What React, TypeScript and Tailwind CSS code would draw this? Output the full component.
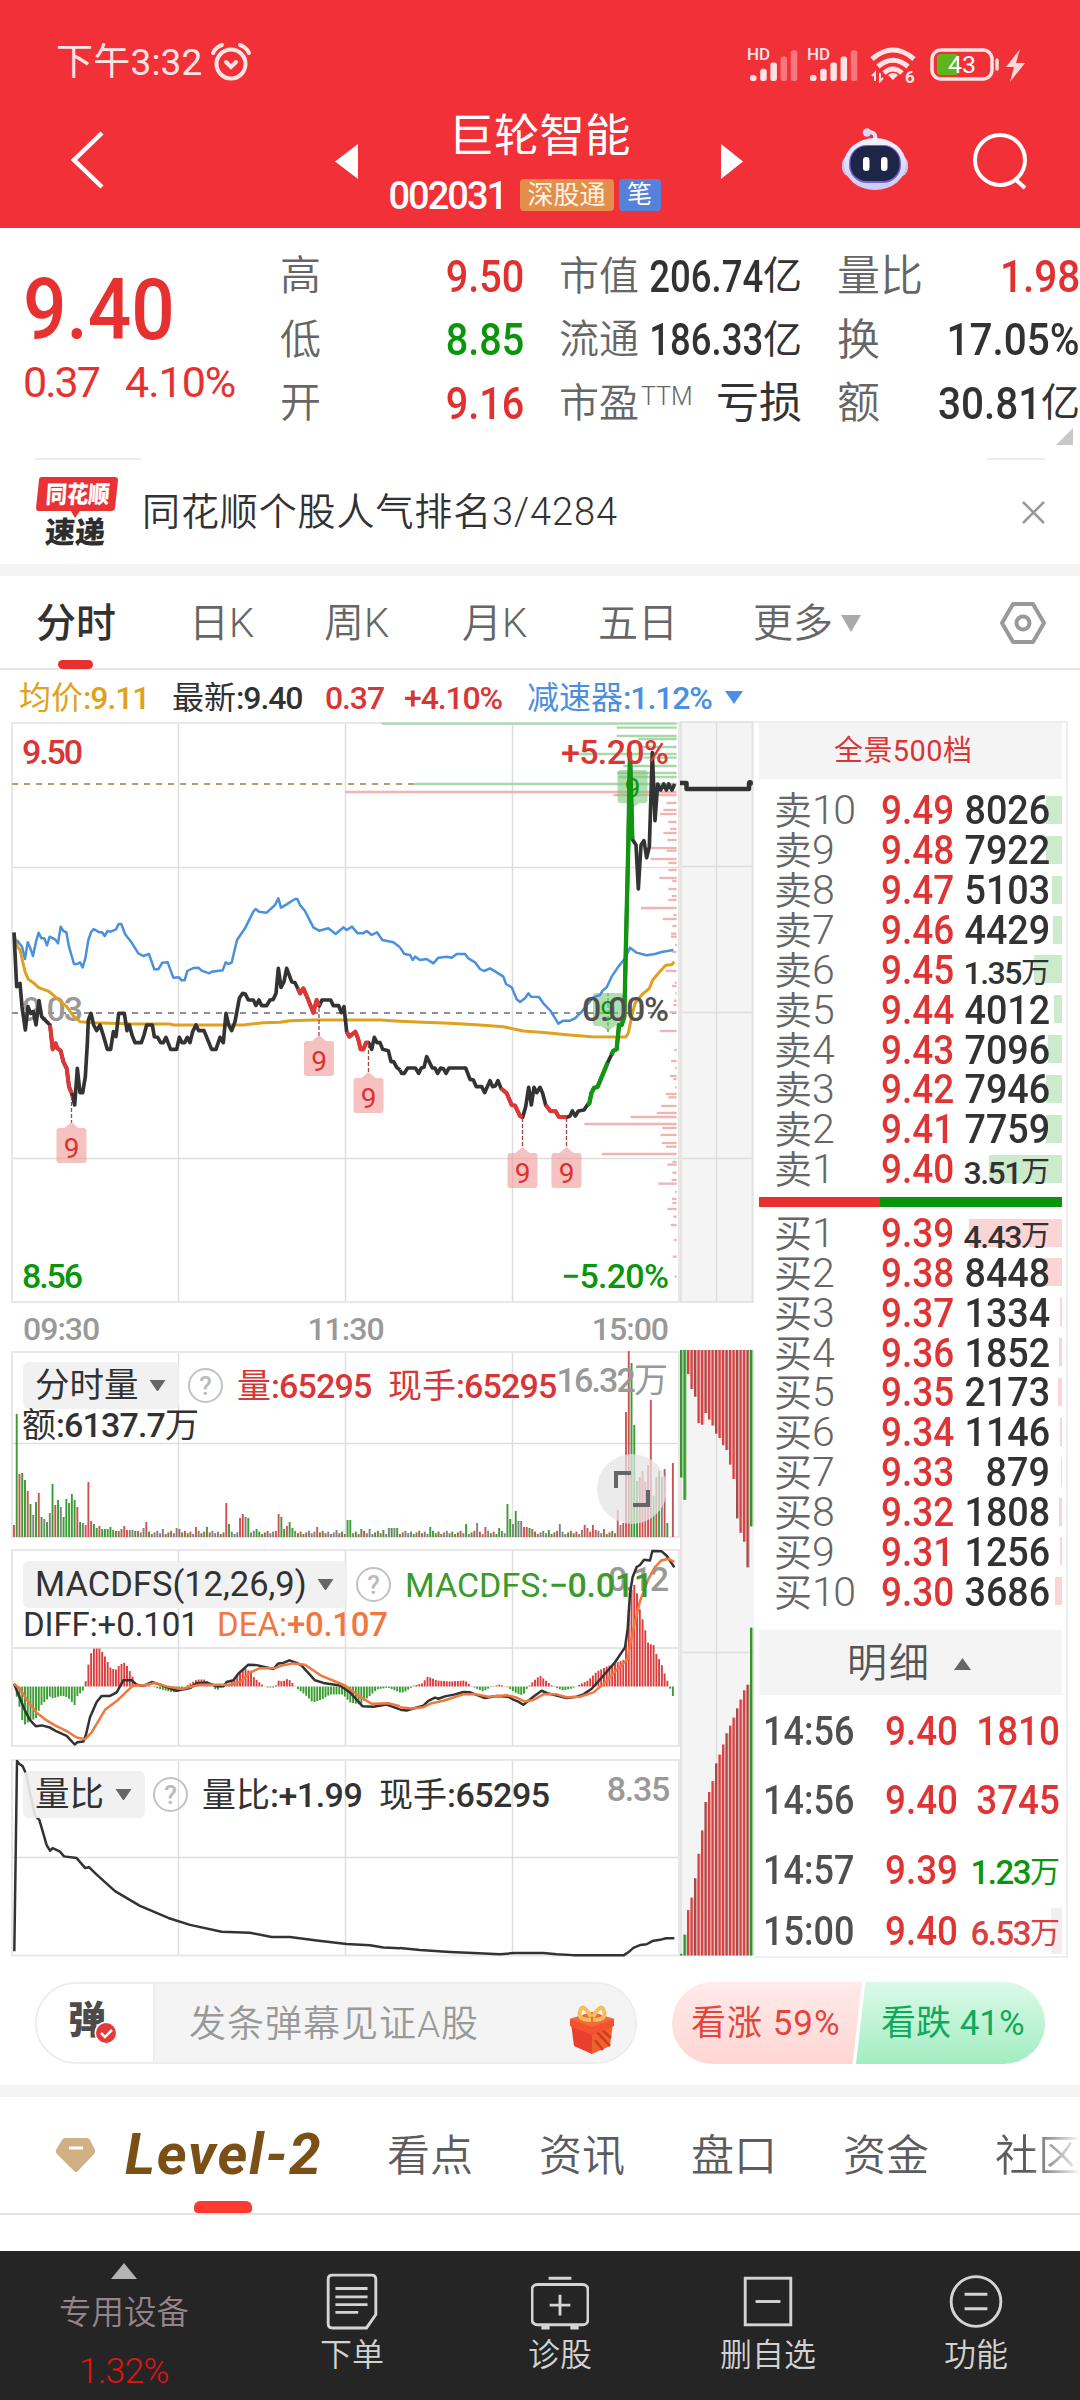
import React from "react";

type Tone = "r" | "g" | "k";

const LATIN = "font-['Roboto','Noto_Sans_CJK_SC',sans-serif]";

/* Numbers are set medium and tight, Han characters lighter. */
function Mixed({ text, className = "", tracking = "tracking-[-0.035em]", han = "font-normal tracking-normal" }: { text: string; className?: string; tracking?: string; han?: string }) {
  return (
    <span className={`whitespace-nowrap ${tracking} ${className}`}>
      {text.split(/([\u4e00-\u9fff]+)/).filter(Boolean).map((part, i) =>
        /[\u4e00-\u9fff]/.test(part) ? <span key={i} className={han}>{part}</span> : part,
      )}
    </span>
  );
}

/* ---------- Header ---------- */

function Signal({ faded }: { faded: number }) {
  return (
    <svg className="overflow-visible" width="52" height="38" viewBox="0 0 52 38">
      <text x="0" y="14" fontSize="17" fontWeight="500" fill="#ffe4e4" textLength="23" fontFamily="Roboto">HD</text>
      {[0, 1, 2, 3, 4].map((i) => (
        <rect key={i} x={3 + i * 10.2} y={29 - i * 6.2} width="6.5" height={6 + i * 6.2} rx="2.5" fill="#ffe4e4" opacity={i > 4 - faded ? 0.4 : 1} />
      ))}
    </svg>
  );
}

function StatusBar() {
  return (
    <div className="flex h-[102px] items-end justify-between pb-[18px] pl-[56px] pr-[54px] text-[#ffe4e4]">
      <div className="flex items-center gap-[7px]">
        <span className="pt-[2px] text-[37px] leading-[42px] tracking-[0.200px]">下午3:32</span>
        <svg width="42" height="40" viewBox="0 0 42 40" fill="none" stroke="#ffe4e4" strokeWidth="4" strokeLinecap="round">
          <circle cx="21" cy="22" r="14.5" />
          <path d="M3 11Q6 5 12 3M39 11Q36 5 30 3M16 20l5 5 5-5" />
        </svg>
      </div>
      <div className="flex items-center">
        <Signal faded={2} />
        <div className="w-[8px]" />
        <Signal faded={1} />
        <svg className="ml-[10px] overflow-visible" width="50" height="38" viewBox="0 0 50 38" fill="none" stroke="#ffe4e4" strokeWidth="5">
          <path d="M3 13Q24-5 45 13M9 20.500Q24 8 39 20.500M15 27Q24 19 33 27" />
          <path d="M24 34l-5-5q5-4 10 0z" fill="#ffe4e4" stroke="none" />
          <path d="M6 35v-8l-3 3M11 27v8l3-3" strokeWidth="2" />
          <text x="36" y="37" fontSize="17" fontWeight="700" fill="#ffe4e4" stroke="none" fontFamily="Roboto">6</text>
        </svg>
        <svg className="ml-[9px]" width="98" height="36" viewBox="0 0 98 36">
          <rect x="9" y="7" width="22" height="21" rx="4" fill="#5fb61c" />
          <rect x="4" y="3" width="60" height="29" rx="9" fill="none" stroke="#ffe4e4" strokeWidth="3.500" />
          <path d="M69 13v9" stroke="#ffe4e4" strokeWidth="3.500" strokeLinecap="round" />
          <text x="20" y="26" fontSize="24" fill="#fff" textLength="28" lengthAdjust="spacingAndGlyphs" fontFamily="Roboto">43</text>
          <path d="M92 2L78 20h8l-4 15 15-19h-9z" fill="#ffd6d6" />
        </svg>
      </div>
    </div>
  );
}

function Robot() {
  return (
    <svg width="68" height="64" viewBox="0 0 68 64">
      <defs>
        <linearGradient id="head" x1="0" y1="0" x2="0" y2="1">
          <stop offset="0" stopColor="#f6f3ff" />
          <stop offset="1" stopColor="#c9ccf5" />
        </linearGradient>
      </defs>
      <path d="M34 12Q36 4 27 4" stroke="#e5dff8" strokeWidth="4" fill="none" />
      <circle cx="26" cy="4.500" r="4.200" fill="#ddd6f6" />
      <rect x="1" y="27" width="66" height="22" rx="9" fill="#c6c3ee" />
      <ellipse cx="34" cy="36" rx="31" ry="26" fill="url(#head)" />
      <rect x="8" y="17" width="52" height="38" rx="18" fill="#7360d8" />
      <rect x="9.500" y="18" width="49" height="35" rx="16" fill="#1d2647" />
      <rect x="22" y="29" width="6.500" height="14" rx="3.200" fill="#fff" />
      <rect x="40" y="29" width="6.500" height="14" rx="3.200" fill="#fff" />
    </svg>
  );
}

function Header() {
  return (
    <header className="h-[228px] bg-[#f13038] text-white">
      <StatusBar />
      <div className="flex h-[126px]">
        <svg className="ml-[66px] mt-[27px]" width="44" height="64" viewBox="0 0 44 64" fill="none" stroke="#fff" strokeWidth="4.500">
          <path d="M36 4L8 31l28 27" />
        </svg>
        <svg className="ml-[225px] mt-[42px]" width="23" height="35" viewBox="0 0 23 35"><path d="M0 17.500L23 0v35z" fill="#fff" /></svg>
        <div className="flex w-[363px] flex-col items-center">
          <div className="mt-[11px] text-[45.500px] leading-[48px]">巨轮智能</div>
          <div className="mr-[30px] mt-[18px] flex h-[32px] items-center">
            <span className="w-[131px] pt-[2px] text-[38px] font-medium leading-none tracking-[-2px]">002031</span>
            <span className="flex h-[32px] w-[94px] items-center justify-center rounded-[4px] bg-[#e48e4b] text-[26px] text-[#fff3e6]">深股通</span>
            <span className="ml-[5px] flex h-[32px] w-[42px] items-center justify-center rounded-[4px] bg-[#5482da] text-[25px]">笔</span>
          </div>
        </div>
        <svg className="mt-[42px]" width="22" height="35" viewBox="0 0 22 35"><path d="M22 17.500L0 0v35z" fill="#fff" /></svg>
        <div className="ml-[98px] mt-[26px]"><Robot /></div>
        <svg className="ml-[63px] mt-[29px]" width="60" height="62" viewBox="0 0 60 62" fill="none" stroke="#fff" strokeWidth="4">
          <circle cx="28" cy="29" r="25" />
          <path d="M43 48l10 9" />
        </svg>
      </div>
    </header>
  );
}

/* ---------- Quote ---------- */

const quoteRows = [
  ["高", "9.50", "text-[#e03030]", "市值", "206.74亿", "量比", "1.98", "text-[#e03030]"],
  ["低", "8.85", "text-[#0a960a]", "流通", "186.33亿", "换", "17.05%", "text-[#323232]"],
  ["开", "9.16", "text-[#e03030]", "市盈", "亏损", "额", "30.81亿", "text-[#323232]"],
];

/* A figure narrowed toward its right edge, followed by an optional Han unit. */
function Figure({ text, className, narrow = "scale-x-[0.9]" }: { text: string; className: string; narrow?: string }) {
  const digits = text.replace(/[\u4e00-\u9fff]+/, "");
  const unit = text.replace(/[^\u4e00-\u9fff]+/, "");
  return (
    <span className={`flex items-center justify-end whitespace-nowrap ${className}`}>
      {digits && <span className={`origin-right ${narrow}`}>{digits}</span>}
      {unit && <span className={digits ? "text-[39px] font-normal" : "text-[43px] font-normal"}>{unit}</span>}
    </span>
  );
}

function Quote() {
  return (
    <section className="relative flex h-[230px] overflow-hidden">
      <div className="w-[280px] pl-[23px] text-[#e73131]">
        <div className="mt-[40px] w-fit origin-left scale-x-[0.9] text-[85px] font-medium leading-[84px]">9.40</div>
        <div className="mt-[7px] flex gap-[26px] text-[43px] leading-[46px]">
          <span className="w-[76px] tracking-[-2px]">0.37</span>
          <span className="tracking-[-1px]">4.10%</span>
        </div>
      </div>
      <div className="flex w-[800px] flex-col pt-[17px]">
        {quoteRows.map(([a, av, at, b, bv, c, cv, ct]) => (
          <div key={a} className="flex h-[63.500px] items-center text-[44px] font-medium leading-none text-[#323232]">
            <span className="w-[110px] text-[41px] font-[350] text-[#666]">{a}</span>
            <Figure text={av} className={`w-[134px] ${at}`} />
            <span className="ml-[35px] w-[60px] whitespace-nowrap text-[40px] font-[350] text-[#666]">
              {b}{b === "市盈" && <sup className="relative -top-[12px] ml-[2px] align-baseline text-[25px] font-light">TTM</sup>}
            </span>
            <Figure text={bv} className="w-[183px]" narrow="scale-x-[0.83]" />
            <span className="ml-[35px] w-[90px] whitespace-nowrap text-[43px] font-[350] text-[#666]">{c}</span>
            <Figure text={cv} className={`w-[153px] ${ct}`} narrow="scale-x-[0.92]" />
          </div>
        ))}
      </div>
      <svg className="absolute bottom-[13px] right-[7px]" width="17" height="17"><path d="M17 0v17H0z" fill="#c8c8c8" /></svg>
    </section>
  );
}

function News() {
  return (
    <section className="h-[106px]">
      <div className="flex justify-between pl-[35px] pr-[35px]">
        <div className="h-[2px] w-[106px] bg-[#ededed]" />
        <div className="h-[2px] w-[58px] bg-[#ededed]" />
      </div>
      <div className="flex h-[104px] items-center pl-[36px] pr-[35px]">
        <svg className="overflow-visible" width="82" height="70" viewBox="0 0 82 70" fontFamily="Noto Sans CJK SC">
          <path d="M6 0h73q3 0 3 3l-3 28q0 3-4 3H44l-5 7-4-7H3q-3 0-3-3L3 3q0-3 3-3z" fill="#e93236" />
          <g transform="skewX(-4)">
            <text x="11" y="26" fontSize="24" fontWeight="900" fill="#fff" textLength="64" lengthAdjust="spacingAndGlyphs">同花顺</text>
            <text x="13" y="66" fontSize="30" fontWeight="900" fill="#2e2e2e" textLength="60">速递</text>
          </g>
        </svg>
        <span className="ml-[24px] grow text-[38px] font-[350] tracking-[0.900px] text-[#323232]">同花顺个股人气排名3/4284</span>
        <svg width="23" height="23" stroke="#999" strokeWidth="2.500"><path d="M1 1l21 21M22 1L1 22" /></svg>
      </div>
    </section>
  );
}

function Tabs() {
  const tabs: [string, string][] = [["日K", "w-[135px]"], ["周K", "w-[138px]"], ["月K", "w-[136px]"], ["五日", "w-[155px]"]];
  return (
    <nav className="flex h-[94px] border-b-2 border-[#e6e6e6] text-[40px] font-[350] text-[#666]">
      <div className="relative flex w-[155px] items-center pl-[36px] pt-[3px] font-medium text-[#323232]">
        分时
        <div className="absolute bottom-[-1px] left-[58px] h-[9px] w-[35px] rounded-[5px] bg-[#e93030]" />
      </div>
      <div className="flex grow items-center pl-[34px] pt-[3px]">
        {tabs.map(([t, w]) => <span key={t} className={w}>{t}</span>)}
        <span>更多</span>
        <svg className="ml-[8px]" width="20" height="17"><path d="M0 0h20L10 17z" fill="#aaa" /></svg>
      </div>
      <svg className="mr-[33px] mt-[25px]" width="48" height="44" viewBox="0 0 48 44" fill="none" stroke="#999" strokeWidth="4" strokeLinejoin="round">
        <path d="M14 3h20l11 19-11 19H14L3 22z" />
        <circle cx="24" cy="22" r="6.500" />
      </svg>
    </nav>
  );
}

function PriceLegend() {
  return (
    <div className="flex h-[51px] items-center pl-[19px] pt-[4px] text-[32px] font-medium leading-none">
      <Mixed text="均价:9.11" className="w-[153px] text-[#e0a020]" />
      <Mixed text="最新:9.40" className="w-[153px] text-[#323232]" />
      <Mixed text="0.37" className="w-[79px] text-[#d93535]" />
      <Mixed text="+4.10%" className="w-[123px] text-[#d93535]" />
      <Mixed text="减速器:1.12%" className="w-[198px] text-[#4a8fe0]" />
      <svg width="18" height="13"><path d="M0 0h18L9 13z" fill="#4a90e8" /></svg>
    </div>
  );
}

/* ---------- Charts ---------- */

const INK = "#333";
const RED = "#e03636";
const GREEN = "#109610";

// Left and right halves of each curve, in thirds of a pixel.
const avgA = "42,672 52,710 60,720 75,785 85,808 100,818 115,832 148,845 165,860 200,890 220,918 240,935 280,938 400,942 510,942 520,945 730,945 790,938 840,937 870,932 940,930 1140,930 1200,934";
const avgB = "60,934 130,937 210,940 300,945 370,950 430,963 500,968 560,974 635,980 737,981 745,970 755,920 765,880 785,855 808,835 818,810 835,790 857,766 875,764 883,755";
const blueA = "42,692 52,692 66,710 75,747 83,697 90,712 99,738 108,695 116,668 124,685 133,685 141,706 149,680 165,688 174,700 182,650 190,663 199,667 207,710 222,762 232,762 240,757 248,772 256,745 265,690 273,667 281,657 298,667 306,667 314,678 323,663 332,665 348,658 356,642 364,642 375,672 393,695 415,730 430,738 447,732 463,778 475,778 487,758 503,757 520,803 537,802 545,811 554,811 562,783 580,774 595,773 605,782 628,790 635,785 668,781 677,757 685,762 695,758 711,690 735,655 760,605 767,597 777,605 800,608 825,585 835,565 843,593 860,583 885,567 892,567 900,585 915,603 940,652 957,662 985,655 1007,672 1030,652 1040,660 1056,650 1073,670 1090,670 1100,663 1115,675 1131,667 1147,690 1180,697 1200,712";
const blueB = "60,712 73,732 90,735 98,750 105,740 120,750 140,747 160,760 175,743 200,740 215,743 230,732 255,732 265,745 285,757 300,777 312,783 330,775 350,787 370,800 378,822 395,832 410,868 420,876 435,865 445,850 453,860 477,861 490,880 512,903 535,941 550,932 570,932 585,925 605,905 640,862 660,855 668,842 680,832 695,800 715,770 735,745 750,713 770,728 800,736 825,732 845,726 880,720";
const priceA = "42,667 50,830 60,820 66,890 76,960 84,890 92,910 100,905 108,945 117,872 125,920 150,945 158,1018 167,1000 172,1015 182,1022 190,1055 200,1075 207,1130 215,1150 224,1185 232,1075 240,1148 248,1148 256,1100 262,1000 265,930 273,910 281,945 290,962 300,945 308,970 322,1018 332,1018 340,965 348,980 356,910 373,910 381,962 388,945 396,975 405,998 424,998 432,975 440,945 457,945 463,980 473,982 482,998 490,998 498,982 512,1018 530,1018 538,982 546,998 554,998 562,982 570,998 578,965 588,945 596,962 612,962 635,1018 648,1018 660,982 670,998 678,910 686,945 695,962 705,935 718,865 728,850 736,852 745,870 760,870 768,886 777,870 785,887 800,887 810,870 820,868 828,850 835,775 843,832 852,815 860,775 875,815 885,818 893,835 900,850 910,835 925,870 940,908 950,870 958,888 966,870 992,870 1000,887 1016,887 1024,908 1032,890 1040,965 1048,980 1066,965 1074,985 1082,1018 1090,1018 1098,998 1106,998 1115,1018 1123,982 1131,998 1140,998 1148,1018 1165,1022 1173,1055 1181,1055 1190,1072 1200,1080";
const priceB = "60,1080 65,1090 73,1090 83,1074 106,1074 116,1090 124,1074 132,1072 140,1040 150,1060 157,1074 165,1074 173,1090 182,1074 190,1076 198,1090 207,1074 257,1074 270,1108 280,1110 289,1130 305,1130 314,1148 330,1112 338,1130 346,1128 354,1112 363,1135 380,1150 395,1185 405,1187 420,1218 428,1222 437,1190 446,1132 454,1185 462,1132 470,1148 480,1132 488,1150 497,1185 511,1203 527,1204 536,1220 560,1222 570,1218 577,1203 586,1218 595,1203 612,1200 622,1185 628,1180 634,1150 642,1134 653,1130 683,1058 694,1035 700,1022 710,1018 717,945 725,945 733,920 737,740 745,400 750,130 757,388 768,405 775,537 783,405 792,392 800,443 808,410 817,128 825,332 833,222 842,240 851,222 859,240 866,222 876,240 884,222";
const redA = ["150,945 158,1018 167,1000 172,1015 182,1022 190,1055 200,1075 207,1130 215,1150", "893,835 900,850 910,835 925,870 940,908 950,870 958,888", "1040,965 1048,980 1066,965 1074,985 1082,1018 1090,1018 1098,998 1106,998"];
const redB = ["363,1135 380,1150 395,1185 405,1187 420,1218 428,1222", "497,1185 511,1203 527,1204 536,1220 560,1222"];
const greenB = ["622,1185 628,1180 634,1150 642,1134 653,1130 683,1058", "694,1035 700,1022 710,1018 717,945 725,945 733,920 737,740 745,400 750,130 757,388"];

const asks = [[41, 5], [53, 710], [78, 710], [87, 775], [111, 775], [132, 590], [143, 790], [168, 730], [189, 712], [201, 716], [222, 100]];
const bids = [[246, -105], [255, 700], [279, 860], [300, 850], [312, 840], [336, 865], [357, 870], [369, 850], [390, 862], [414, 810], [422, 860], [447, 812], [459, 865], [480, 865], [504, 838], [513, 877], [537, 865], [558, 875], [570, 865], [594, 783], [615, 880], [627, 848], [648, 877], [671, 873], [680, 873], [705, 885], [726, 877], [783, 857], [818, 884], [828, 876], [850, 886], [872, 882], [885, 880], [907, 868], [963, 840], [1020, 883], [1053, 873], [1074, 885], [1098, 870], [1107, 880], [1132, 885], [1152, 857], [1162, 865], [1188, 843], [1209, 830], [1221, 752], [1242, 613], [1254, 847], [1275, 841], [1299, 845], [1310, 858], [1332, 665], [1356, 877], [1364, 862], [1388, 877], [1410, 875], [1421, 835], [1446, 885], [1467, 876], [1479, 877], [1497, 862], [1520, 880], [1545, 872], [1590, 882], [1640, 878], [1700, 884]];

function Grid({ top, mid, bottom }: { top: number; mid: number[]; bottom: number }) {
  return (
    <g strokeWidth="1.500" fill="none">
      <path d={`M178.500 ${top}V${bottom}M345.500 ${top}V${bottom}M512.500 ${top}V${bottom}`} stroke="#dedede" />
      {mid.map((y) => <path key={y} d={`M12 ${y}H680`} stroke="#dedede" />)}
      <rect x="12" y={top} width="667" height={bottom - top} stroke="#e8e8e8" strokeWidth="2" />
    </g>
  );
}

function Nine({ x, y, from, up }: { x: number; y: number; from: number; up?: boolean }) {
  const c = up ? "#0a960a" : "#dd3030";
  const bg = up ? "#7cc87c" : "#f09898";
  return (
    <g>
      {from > 0 && <path d={`M${x} ${from}V${y}`} stroke={up ? "#2a9a2a" : "#a04545"} strokeWidth="1.300" strokeDasharray="4 2" />}
      <path
        d={up
          ? `M${x - 12} ${y}h24q3 0 3 3v27q0 3-3 3h-5l-7 5-7-5h-5q-3 0-3-3v-27q0-3 3-3z`
          : `M${x - 12} ${y + 5}h5l7-6 7 6h5q3 0 3 3v29q0 3-3 3h-24q-3 0-3-3v-29q0-3 3-3z`}
        fill={bg} fillOpacity="0.600"
      />
      <text x={x} y={up ? y + 28 : y + 35} fontSize="28" fill={c} textAnchor="middle">9</text>
    </g>
  );
}

function PriceChart() {
  const pen = { fill: "none", strokeLinejoin: "round" as const };
  return (
    <svg className="block" width="680" height="582" viewBox="0 721 680 582" fontFamily="Roboto">
      <Grid top={723} mid={[867.5, 1158.5]} bottom={1302} />
      <path d="M12 784H676" stroke="#b0a070" strokeWidth="1.800" strokeDasharray="6 6" />
      <path d="M12 1013H676" stroke="#909090" strokeWidth="1.800" strokeDasharray="6 6" />
      <g transform="translate(380 710) scale(0.33333)">
        {asks.map(([y, x]) => <path key={y} d={`M${x} ${y}H890`} stroke="#a8d8a8" strokeWidth="7" />)}
        {bids.map(([y, x]) => <path key={y} d={`M${x} ${y}H890`} stroke="#efb4b4" strokeWidth="7" />)}
      </g>
      <text x="22" y="1021" fontSize="34" fontWeight="500" fill="#999" textLength="61">9.03</text>
      <g transform="translate(0 710) scale(0.33333)" {...pen}>
        <polyline points={avgA} stroke="#e0a020" strokeWidth="9" />
        <polyline points={blueA} stroke="#4a90dc" strokeWidth="7.500" />
        <polyline points={priceA} stroke={INK} strokeWidth="11" />
        {redA.map((p) => <polyline key={p} points={p} stroke={RED} strokeWidth="12" />)}
      </g>
      <Nine x={632.5} y={770} from={0} up />
      <Nine x={608} y={993} from={1032} up />
      <g transform="translate(380 710) scale(0.33333)" {...pen}>
        <polyline points={avgB} stroke="#e0a020" strokeWidth="9" />
        <polyline points={blueB} stroke="#4a90dc" strokeWidth="7.500" />
        <polyline points={priceB} stroke={INK} strokeWidth="11" />
        {redB.map((p) => <polyline key={p} points={p} stroke={RED} strokeWidth="12" />)}
        {greenB.map((p) => <polyline key={p} points={p} stroke={GREEN} strokeWidth="13" />)}
      </g>
      <Nine x={71.5} y={1123} from={1096} />
      <Nine x={319} y={1036} from={1008} />
      <Nine x={368.5} y={1073} from={1044} />
      <Nine x={522.5} y={1148} from={1118} />
      <Nine x={566.5} y={1148} from={1118} />
      <g fontSize="34" fontWeight="500">
        <text x="22" y="764" fill="#d93535" textLength="61">9.50</text>
        <text x="561" y="764" fill="#d93535" textLength="108">+5.20%</text>
        <text x="582" y="1021" fill="#505050" textLength="87">0.00%</text>
        <text x="22" y="1288" fill="#0a960a" textLength="61">8.56</text>
        <text x="561" y="1288" fill="#0a960a" textLength="108">−5.20%</text>
      </g>
    </svg>
  );
}

function TimeAxis() {
  return (
    <div className="flex h-[48px] items-center justify-between pl-[23px] pr-[12px] pt-[3px] text-[32px] font-medium leading-none tracking-[-1px] text-[#999]">
      <span>09:30</span><span>11:30</span><span>15:00</span>
    </div>
  );
}

const spikes: Record<number, [number, Tone]> = {};
const early: [number, Tone][] = [
  [12, "r"], [123, "g"], [63, "r"], [64, "g"], [57, "g"], [46, "r"], [33, "g"], [22, "k"], [35, "g"], [44, "r"], [20, "g"], [18, "k"], [15, "g"], [24, "k"], [53, "g"], [32, "r"],
  [37, "g"], [30, "k"], [20, "g"], [38, "g"], [34, "g"], [43, "g"], [37, "g"], [30, "r"], [15, "g"], [14, "k"], [12, "r"], [55, "r"], [16, "r"], [13, "g"], [9, "g"], [11, "r"],
  [8, "g"], [8, "g"], [8, "g"], [10, "g"], [7, "g"], [6, "r"], [6, "g"], [8, "r"], [11, "r"], [7, "r"], [7, "k"], [7, "k"], [6, "g"], [6, "r"],
];
early.forEach((b, i) => (spikes[i] = b));
const later: [number, number, Tone][] = [
  [47, 9, "k"], [48, 15, "r"], [54, 8, "k"], [59, 9, "k"], [60, 8, "r"], [66, 10, "r"], [70, 10, "g"], [77, 34, "r"], [78, 13, "g"], [82, 19, "r"], [83, 23, "r"], [84, 20, "k"], [85, 19, "g"], [88, 8, "g"],
  [95, 6, "r"], [96, 23, "r"], [97, 20, "g"], [98, 8, "g"], [99, 11, "r"], [100, 15, "g"], [101, 9, "g"], [110, 10, "r"], [117, 7, "k"], [121, 17, "g"], [122, 17, "g"], [126, 8, "g"], [129, 8, "k"], [134, 7, "g"],
  [136, 9, "k"], [137, 9, "g"], [138, 9, "k"], [139, 9, "g"], [151, 10, "g"], [164, 13, "g"], [168, 14, "k"], [171, 10, "r"], [176, 9, "g"], [179, 33, "g"], [180, 18, "g"], [181, 13, "k"], [182, 26, "g"], [183, 16, "k"],
  [184, 16, "k"], [185, 10, "r"], [186, 10, "r"], [187, 9, "g"], [188, 8, "r"], [194, 7, "g"], [198, 13, "k"], [206, 7, "k"], [207, 12, "r"], [208, 9, "r"], [210, 12, "r"], [211, 7, "r"], [214, 8, "r"], [219, 27, "r"],
  [220, 12, "k"], [221, 14, "r"], [222, 125, "r"], [223, 187, "r"], [224, 174, "g"], [225, 112, "g"], [226, 56, "g"], [227, 60, "r"], [228, 66, "r"], [229, 55, "r"], [230, 72, "r"], [231, 137, "r"], [232, 41, "g"],
  [233, 60, "r"], [234, 66, "g"], [235, 60, "k"], [236, 68, "r"], [237, 14, "g"], [238, 0, "k"], [239, 74, "r"],
];
later.forEach(([i, h, t]) => (spikes[i] = [h, t]));
const volume = Array.from({ length: 240 }, (_, i): [number, Tone] =>
  spikes[i] ?? [3 + ((i * 7) % 5) * 0.8, (["g", "k", "r", "k", "g", "r", "k"] as Tone[])[(i * 5) % 7]],
);
const toneFill: Record<Tone, string> = { r: "#cf5252", g: "#3a9c32", k: "#808080" };

function Help({ className = "" }: { className?: string }) {
  return (
    <span className={`flex h-[35px] w-[35px] shrink-0 items-center justify-center rounded-full border-[2.500px] border-[#c2c2c2] text-[26px] font-medium leading-none text-[#bbb] ${className}`}>?</span>
  );
}

function Picker({ label, className }: { label: string; className: string }) {
  return (
    <span className={`flex h-[47px] shrink-0 items-center justify-between rounded-[6px] bg-[#f0f0f0]/90 pl-[12px] pr-[13px] text-[#323232] ${className}`}>
      <span className="whitespace-nowrap text-[34.500px] font-normal leading-none">{label}</span>
      <svg width="17" height="12"><path d="M1 0h15L8.500 11z" fill="#666" stroke="#666" strokeLinejoin="round" /></svg>
    </span>
  );
}

function VolumePanel() {
  return (
    <div className="relative h-[187px] text-[34px] font-medium leading-none">
      <svg className="block" width="680" height="187" viewBox="0 1351 680 187" fontFamily="Roboto">
        <Grid top={1352} mid={[1443.5]} bottom={1537} />
        {volume.map(([h, t], i) => <rect key={i} x={13 + i * 2.757} y={1537 - h} width="1.900" height={h} fill={toneFill[t]} />)}
      </svg>
      <div className="absolute left-[23px] top-[11px] flex items-center">
        <Picker label="分时量" className="w-[156px]" />
        <Help className="ml-[9px]" />
        <Mixed text="量:65295" tracking="tracking-[-0.025em]" className="ml-[14px] w-[151px] text-[#d93535]" />
        <Mixed text="现手:65295" tracking="tracking-[-0.025em]" className="w-[168px] text-[#d93535]" />
      </div>
      <Mixed text="额:6137.7万" tracking="tracking-[-0.025em]" className="absolute left-[22px] top-[57px] text-[#323232]" />
      <Mixed text="16.32万" tracking="tracking-[-0.055em]" className="absolute right-[12px] top-[12px] text-[#999]" />
      <svg className="absolute left-[597px] top-[103px]" width="70" height="70" fill="none" stroke="#666" strokeWidth="4">
        <circle cx="35" cy="35" r="35" fill="#e4e4e4" fillOpacity="0.750" stroke="none" />
        <path d="M19 34V19h15M36 51h15V36" />
      </svg>
    </div>
  );
}

const histogram: [number, number][] = [
  [14, 0], [17, -11], [20, -22], [22, -33], [25, -38], [28, -36], [37, -31], [40, -20], [50, -10], [53, -12], [62, -9], [68, -11], [75, -19], [77, -10], [83, -4], [85, 1], [88, 20], [91, 33], [94, 38], [100, 38],
  [102, 35], [105, 30], [111, 18], [116, 17], [120, 22], [125, 24], [128, 19], [133, 9], [136, 0], [150, 1], [158, -2], [173, -6], [182, -2], [187, 1], [197, 7], [205, 7], [212, 0], [217, -4], [222, 0], [230, 3],
  [238, 11], [245, 18], [250, 15], [255, 8], [262, 2], [267, -1], [275, -1], [278, 6], [283, 5], [288, 8], [293, 3], [297, -2], [305, -8], [313, -16], [322, -13], [330, -8], [343, -8], [350, -16], [360, -18], [368, -11],
  [377, -3], [388, -1], [400, -6], [404, -6], [410, -2], [414, 1], [422, 3], [428, 10], [437, 6], [450, 5], [465, 6], [472, 0], [483, -5], [492, 0], [500, 2], [508, -1], [515, -6], [523, -9], [527, -2], [533, 5],
  [540, 11], [547, 5], [553, 0], [563, -4], [572, -2], [580, 2], [588, 6], [597, 15], [607, 20], [617, 24], [625, 27], [627, 57], [630, 90], [633, 103], [636, 100], [639, 81], [641, 72], [644, 63], [647, 48],
  [650, 37], [652, 49], [655, 35], [661, 24], [666, 9], [669, 2], [671, -5], [674, -12],
];
function valueAt(x: number) {
  const k = histogram.findIndex((p) => p[0] >= x);
  if (k <= 0) return k === 0 ? histogram[0][1] : histogram[histogram.length - 1][1];
  const [x0, y0] = histogram[k - 1];
  const [x1, y1] = histogram[k];
  return y0 + ((y1 - y0) * (x - x0)) / (x1 - x0);
}

const diffA = "42,908 58,938 75,970 90,992 108,1006 125,1004 150,1009 170,1018 200,1028 224,1048 232,1043 250,1041 258,1025 270,985 290,950 305,936 330,936 350,928 370,900 395,900 410,910 430,913 455,904 480,910 530,924 570,918 590,907 620,905 650,914 670,914 680,904 700,900 715,885 745,864 770,865 820,874 835,861 850,860 868,854 890,860 905,866 945,900 970,906 1020,912 1050,928 1088,960 1120,961 1160,956 1200,967";
const diffB = "0,920 20,922 40,917 70,910 85,898 105,890 115,893 135,887 165,882 190,876 210,877 255,891 290,886 325,888 340,895 355,900 370,908 385,898 405,885 425,873 445,880 460,883 500,891 530,888 550,882 575,868 600,845 645,802 675,765 683,720 690,630 698,590 710,565 720,560 732,547 750,549 757,525 785,526 800,537 823,566";
const deaA = "42,908 60,920 85,950 110,975 135,990 165,1004 200,1017 230,1032 255,1036 275,1020 315,968 350,948 385,922 400,912 430,912 465,906 500,914 545,920 600,910 640,910 690,910 720,904 750,882 780,872 825,872 845,866 880,861 915,864 965,890 1035,912 1075,935 1115,954 1165,953 1200,960";
const deaB = "0,914 35,917 70,914 95,904 130,898 190,882 230,882 265,888 320,884 350,890 375,900 400,896 430,882 470,882 500,889 540,888 580,877 610,857 640,830 670,805 682,795 700,720 720,650 745,595 765,565 785,548 805,545 823,552";
const ratioA = "43,1525 51,1086 58,1093 68,1098 78,1115 90,1160 105,1212 118,1222 140,1280 150,1293 158,1287 180,1295 192,1306 230,1310 256,1333 267,1331 290,1348 345,1386 420,1420 505,1448 570,1464 665,1480 750,1482 815,1492 870,1492 950,1500 1040,1508 1110,1511 1150,1516 1200,1518";
const ratioB = "0,1513 60,1518 150,1523 220,1526 300,1529 340,1526 430,1526 470,1529 520,1531 672,1531 685,1524 700,1513 720,1506 740,1504 757,1496 780,1493 798,1489 823,1489";

function Curve({ a, b, color }: { a: string; b: string; color: string }) {
  return (
    <g fill="none" stroke={color} strokeWidth="2.500" strokeLinejoin="round">
      <polyline points={a} transform="translate(0 1290) scale(0.33333 0.43367)" vectorEffect="non-scaling-stroke" />
      <polyline points={b} transform="translate(400 1340) scale(0.33333 0.40178)" vectorEffect="non-scaling-stroke" />
    </g>
  );
}

function MacdPanel() {
  return (
    <div className="relative h-[198px] text-[33px] leading-none">
      <svg className="block" width="680" height="198" viewBox="0 1549 680 198" fontFamily="Roboto">
        <Grid top={1550} mid={[1648]} bottom={1746} />
        {Array.from({ length: 240 }, (_, i) => {
          const v = valueAt(14 + i * 2.757);
          return <rect key={i} x={13 + i * 2.757} y={v > 0 ? 1686.500 - v : 1686.500} width="1.900" height={Math.abs(v)} fill={v > 0 ? "#dc3c3c" : "#3a9c32"} />;
        })}
        <text x="608" y="1591" fontSize="34" fontWeight="500" fill="#999" textLength="61">0.12</text>
        <Curve a={diffA} b={diffB} color={INK} />
        <Curve a={deaA} b={deaB} color="#f07840" />
      </svg>
      <div className="absolute left-[23px] top-[12px] flex items-center">
        <Picker label="MACDFS(12,26,9)" className="w-[324px]" />
        <Help className="ml-[9px]" />
        <span className="ml-[14px] whitespace-nowrap text-[34px] text-[#3a9a2c]">MACDFS:<span className="font-medium tracking-[-0.300px]">−0.011</span></span>
      </div>
      <div className="absolute left-[23px] top-[59px] flex gap-[19px] whitespace-nowrap">
        <span className="w-[175px] tracking-[-0.100px] text-[#323232]">DIFF:+0.101</span>
        <span className="text-[#f07840]">DEA:<span className="font-medium tracking-[-0.300px]">+0.107</span></span>
      </div>
    </div>
  );
}

function RatioPanel() {
  return (
    <div className="relative h-[198px] text-[34px] font-medium leading-none text-[#323232]">
      <svg className="block" width="680" height="198" viewBox="0 1759 680 198">
        <Grid top={1760} mid={[1857.5]} bottom={1955.5} />
        <Curve a={ratioA} b={ratioB} color={INK} />
      </svg>
      <div className="absolute left-[23px] top-[12px] flex items-center">
        <Picker label="量比" className="w-[122px]" />
        <Help className="ml-[8px]" />
        <Mixed text="量比:+1.99" tracking="tracking-[-0.015em]" className="ml-[14px] w-[177px]" />
        <Mixed text="现手:65295" tracking="tracking-[-0.015em]" />
      </div>
      <span className="absolute right-[11px] top-[13px] tracking-[-1.300px] text-[#999]">8.35</span>
    </div>
  );
}

const upper = [342, 398, 85, 122, 141, 207, 211, 182, 198, 213, 233, 244, 262, 274, 310, 346, 444, 480, 502, 566, 464];
const lower = [1528, 1480, 1419, 1388, 1340, 1279, 1221, 1150, 1125, 1098, 1054, 1032, 1007, 979, 960, 940, 917, 895, 872, 858, 716];

function AuctionColumn() {
  const tone = (i: number) => (i < 2 || i === 20 ? "#33952a" : i % 3 === 1 ? "#a84848" : "#dc4040");
  return (
    <svg className="block shrink-0" width="74" height="1236" viewBox="680 721 74 1236">
      <rect x="680" y="721" width="74" height="582" fill="#f4f4f4" />
      <rect x="680" y="1350" width="74" height="606" fill="#f4f4f4" />
      <path d="M680 866.500H753M680 1012.500H753M680 1158.500H753M716.500 722V1302M716.500 1350V1955M680 1652.500H753" stroke="#dcdcdc" strokeWidth="1.300" />
      <path d="M681 721V1302M752.500 721V1302M680 722H753M681 1350V1955M680 1302H753" stroke="#e4e4e4" strokeWidth="2" />
      <path d="M680 783h6.500v6H749v-6" fill="none" stroke={INK} strokeWidth="4.500" strokeLinejoin="round" />
      <circle cx="750" cy="783" r="3" fill={INK} />
      {upper.map((y, i) => <g key={i}><rect x={680 + i * 3.500} y="1350" width="3.500" height={(y - 25) / 2.489} fill={tone(i)} opacity="0.300" /><rect x={680 + i * 3.500} y="1350" width="2.200" height={(y - 25) / 2.489} fill={tone(i)} /></g>)}
      {lower.map((y, i) => <g key={i}><rect x={680 + i * 3.500} y={1340 + y / 2.489} width="3.500" height={(1532 - y) / 2.489} fill={tone(i)} opacity="0.300" /><rect x={680 + i * 3.500} y={1340 + y / 2.489} width="2.200" height={(1532 - y) / 2.489} fill={tone(i)} /></g>)}
    </svg>
  );
}

/* ---------- Order book ---------- */

type Level = [string, string, string, string, string];
const sells: Level[] = [
  ["卖", "10", "9.49", "8026", "w-[16px]"], ["卖", "9", "9.48", "7922", "w-[16px]"], ["卖", "8", "9.47", "5103", "w-[10px]"], ["卖", "7", "9.46", "4429", "w-[9px]"], ["卖", "6", "9.45", "1.35万", "w-[28px]"],
  ["卖", "5", "9.44", "4012", "w-[8px]"], ["卖", "4", "9.43", "7096", "w-[14px]"], ["卖", "3", "9.42", "7946", "w-[16px]"], ["卖", "2", "9.41", "7759", "w-[16px]"], ["卖", "1", "9.40", "3.51万", "w-[73px]"],
];
const buys: Level[] = [
  ["买", "1", "9.39", "4.43万", "w-[93px]"], ["买", "2", "9.38", "8448", "w-[18px]"], ["买", "3", "9.37", "1334", "w-[2px]"], ["买", "4", "9.36", "1852", "w-[3px]"], ["买", "5", "9.35", "2173", "w-[4px]"],
  ["买", "6", "9.34", "1146", "w-[2px]"], ["买", "7", "9.33", "879", "w-[1px]"], ["买", "8", "9.32", "1808", "w-[3px]"], ["买", "9", "9.31", "1256", "w-[2px]"], ["买", "10", "9.30", "3686", "w-[7px]"],
];

function LevelRow({ level: [side, n, price, qty, bar], barColor }: { level: Level; barColor: string }) {
  const big = qty.includes("万");
  return (
    <div className="relative flex h-[39.860px] items-center pt-[2px] text-[41px] font-medium leading-none text-[#323232]">
      <div className={`absolute right-0 top-[6px] h-[28px] ${bar} ${barColor}`} />
      <span className="relative ml-[15px] w-[107px] whitespace-nowrap font-light text-[#666]"><span className="text-[38px] font-[350]">{side}</span><span className="tracking-[-1.500px]">{n}</span></span>
      <span className="relative w-[74px] origin-left scale-x-[0.9] text-[#e03434]">{price}</span>
      <span className={`relative flex grow items-center justify-end whitespace-nowrap pr-[12px] ${big ? "pt-[6px] text-[32px] tracking-[-1.500px]" : ""}`}>
        <span className={big ? "" : "origin-right scale-x-[0.92]"}>{qty.replace("万", "")}</span>
        {big && <span className="text-[29px] font-normal tracking-normal">万</span>}
      </span>
    </div>
  );
}

const trades = [
  ["14:56", "9.40", "1810", "text-[#e03434]", "h-[70px]"],
  ["14:56", "9.40", "3745", "text-[#e03434]", "h-[69px]"],
  ["14:57", "9.39", "1.23万", "text-[#0a960a]", "h-[70px]"],
  ["15:00", "9.40", "6.53万", "text-[#d94040]", "h-[52px]"],
];

function OrderBook() {
  return (
    <aside className="h-[1237px] w-[314px] border-2 border-l-0 border-[#eee] bg-white pl-[5px] pr-[4px]">
      <div className="flex h-[56px] items-center bg-[#f4f4f4] pl-[75px] pt-[2px] text-[29px] tracking-[0.400px] text-[#d93535]">全景500档</div>
      <div className="mt-[11px]">{sells.map((l) => <LevelRow key={l[1]} level={l} barColor="bg-[#cceacc]" />)}</div>
      <div className="mt-[8px] flex h-[10px]"><div className="w-[121px] bg-[#e93030]" /><div className="grow bg-[#0a960a]" /></div>
      <div className="mt-[6px]">{buys.map((l) => <LevelRow key={l[1]} level={l} barColor="bg-[#fbd5d5]" />)}</div>
      <div className="mt-[19px] flex h-[65px] items-center bg-[#f4f4f4] pl-[88px] pt-[2px] text-[40px] font-[350] tracking-[2px] text-[#555]">
        明细
        <svg className="ml-[23px]" width="17" height="12"><path d="M0 12h17L8.500 0z" fill="#666" /></svg>
      </div>
      {trades.map(([t, p, q, c, h], i) => (
        <div key={i} className={`relative flex items-center pt-[3px] text-[40px] font-medium leading-none ${h}`}>
          {i === 3 && <div className="absolute right-0 top-[4px] h-[46px] w-[11px] bg-[#f4ecef]" />}
          <span className="relative ml-[4px] w-[122px] text-[#505050]"><span className="inline-block origin-left scale-x-[0.9]">{t}</span></span>
          <span className="relative w-[74px] origin-left scale-x-[0.92] text-[#e03434]">{p}</span>
          <span className={`relative flex grow items-center justify-end whitespace-nowrap pr-[2px] ${c} ${q.includes("万") ? "pt-[3px] text-[33px] tracking-[-1.500px]" : ""}`}>
            <span className={q.includes("万") ? "" : "origin-right scale-x-[0.92]"}>{q.replace("万", "")}</span>
            {q.includes("万") && <span className="text-[30px] font-normal tracking-normal">万</span>}
          </span>
        </div>
      ))}
    </aside>
  );
}

/* ---------- Comment bar and lower tabs ---------- */

function Gift() {
  return (
    <svg width="48" height="50" viewBox="0 0 48 50">
      <path d="M3 18l21 7v24L6 41z" fill="#e8402c" />
      <path d="M45 18l-21 7v24l18-8z" fill="#f0602f" />
      <path d="M27 25l15 16M32 23l11 10M27 35l8 10" stroke="#d03a22" strokeWidth="2.500" />
      <path d="M2 14l22-7 22 7v7l-22 9L2 21z" fill="#f5512f" />
      <path d="M2 14l22-7 22 7-22 8z" fill="#f4683f" />
      <path d="M23 15Q9 15 12 6T23 12M25 15q14 0 11-9T25 12" fill="none" stroke="#f5c05a" strokeWidth="4" />
    </svg>
  );
}

function CommentBar() {
  return (
    <section className="flex h-[128px] items-start pl-[35px] pt-[25px]">
      <div className="flex h-[82px] w-[602px] overflow-hidden rounded-full border-2 border-[#ededed]">
        <div className="relative w-[118px] border-r-2 border-[#ededed] bg-white">
          <span className="absolute left-[31px] top-[13px] text-[38px] font-black leading-[46px] text-[#4c4c4c]">弹</span>
          <svg className="absolute left-[57px] top-[37px]" width="24" height="24"><circle cx="12" cy="12" r="11.500" fill="#fff" /><circle cx="12" cy="12" r="10" fill="#e33a38" /><path d="M7 12l4 4 7-7" fill="none" stroke="#fff" strokeWidth="2.500" /></svg>
        </div>
        <div className="flex grow items-center bg-[#f4f4f4] pl-[34px]">
          <span className="w-[379px] pt-[3px] text-[37px] font-[350] tracking-[1px] text-[#999]">发条弹幕见证A股</span>
          <div className="mt-[14px]"><Gift /></div>
        </div>
      </div>
      <div className="relative ml-[35px] flex h-[82px] w-[373px] overflow-hidden rounded-full text-[35px] font-normal">
        <div className="flex w-[190px] items-center whitespace-nowrap bg-gradient-to-b from-[#ffebea] to-[#ffd6d3] pl-[19px] pt-[3px] tracking-[1px] text-[#e5443c] [clip-path:polygon(0_0,100%_0,95%_100%,0_100%)]">看涨 59%</div>
        <div className="-ml-[6px] flex grow items-center whitespace-nowrap bg-gradient-to-b from-[#dafae8] to-[#a2edc2] pl-[25px] pt-[3px] text-[#10a95c] [clip-path:polygon(5%_0,100%_0,100%_100%,0_100%)]">看跌 41%</div>
      </div>
    </section>
  );
}

function LowerTabs() {
  return (
    <nav className="relative flex h-[118px] items-center overflow-hidden border-b-2 border-[#e4e4e4] text-[43px] font-[350] text-[#5c5c5c]">
      <svg className="ml-[55px] shrink-0" width="42" height="37" viewBox="0 0 42 37"><path d="M10 1h22q2 0 3 2l5 10q1 2-1 4L23 34q-2 2-4 0L2 17q-2-2-1-4L7 3q1-2 3-2z" fill="#d2b083" /><path d="M14 11h14" stroke="#fff" strokeWidth="3" /></svg>
      <span className="ml-[28px] w-[262px] shrink-0 text-[57px] font-bold italic tracking-[1.800px] text-[#7a5016]">Level-2</span>
      {["看点", "资讯", "盘口", "资金"].map((t) => <span key={t} className="w-[152px] shrink-0 pt-[2px]">{t}</span>)}
      <span className="shrink-0 bg-gradient-to-r from-[#5c5c5c] from-40% to-white bg-clip-text pt-[2px] text-transparent">社区</span>
      <div className="absolute bottom-0 left-[194px] h-[12px] w-[58px] rounded-t-[6px] rounded-b-[4px] bg-[#fc3a30]" />
    </nav>
  );
}

function Toolbar() {
  const items: [string, React.ReactNode][] = [
    ["下单", <><path d="M9 3h38q4 0 4 4v34L42 54H9q-4 0-4-4V7q0-4 4-4z" /><path d="M12 16h31M12 24h31M12 31.500h31M12 39h22" /></>],
    ["诊股", <><rect x="1" y="12" width="54" height="39" rx="5" /><path d="M17 6h22M28 22v20M18 32h20" /><path d="M10 53.500h8M38 53.500h8" strokeWidth="4" /></>],
    ["删自选", <><rect x="6" y="6" width="44" height="45" /><path d="M16 28.500h24" /></>],
    ["功能", <><circle cx="28" cy="28.500" r="24" /><path d="M17 21.500h22M17 35.500h22" /></>],
  ];
  return (
    <footer className="flex h-[149px] bg-[#252525] text-[32px] font-[350] text-[#d2d2d2]">
      <div className="flex w-[248px] flex-col items-center">
        <svg className="mt-[12px]" width="26" height="16"><path d="M0 16h26L13 0z" fill="#b4b4b4" /></svg>
        <span className="mt-[12px] text-[32.500px] leading-[44px] text-[#958489]">专用设备</span>
        <span className="mt-[17px] text-[35px] leading-[40px] tracking-[-0.500px] text-[#e01414]">1.32%</span>
      </div>
      {items.map(([label, icon]) => (
        <div key={label} className="flex w-[208px] flex-col items-center">
          <svg className="mt-[21px]" width="58" height="58" viewBox="0 0 56 56" fill="none" stroke="#d4d4d4" strokeWidth="2.800">{icon}</svg>
          <span className="mt-[3px] leading-[44px]">{label}</span>
        </div>
      ))}
    </footer>
  );
}

export default function App() {
  return (
    <div className={`h-[2400px] w-[1080px] overflow-hidden bg-white ${LATIN}`}>
      <Header />
      <Quote />
      <News />
      <div className="h-[12px] bg-[#f4f4f4]" />
      <Tabs />
      <PriceLegend />
      <main className="flex h-[1236px]">
        <div className="w-[680px]">
          <PriceChart />
          <TimeAxis />
          <VolumePanel />
          <div className="h-[11px]" />
          <MacdPanel />
          <div className="h-[12px]" />
          <RatioPanel />
        </div>
        <AuctionColumn />
        <OrderBook />
      </main>
      <CommentBar />
      <div className="h-[12px] bg-[#f4f4f4]" />
      <LowerTabs />
      <div className="h-[36px]" />
      <Toolbar />
    </div>
  );
}
